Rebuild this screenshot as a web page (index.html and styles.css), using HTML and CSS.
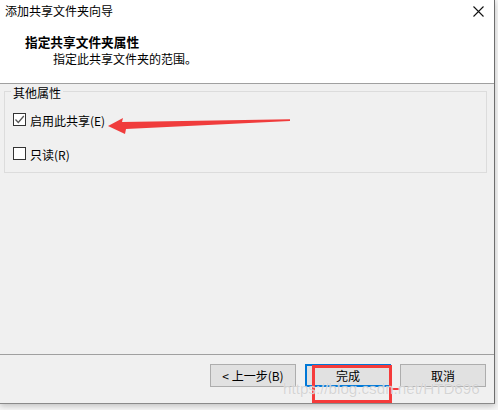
FILE: index.html
```html
<!DOCTYPE html>
<html lang="zh-CN">
<head>
<meta charset="utf-8">
<title>添加共享文件夹向导</title>
<link rel="stylesheet" href="styles.css">
</head>
<body>
<div class="dialog">
  <div class="header">
    <div class="titlebar">
      <span class="title">添加共享文件夹向导</span>
      <svg class="close" width="11" height="11" viewBox="0 0 11 11"><path d="M0.5 0.5 L10.5 10.5 M10.5 0.5 L0.5 10.5" stroke="#111" stroke-width="1.1" fill="none"/></svg>
    </div>
    <div class="heading">指定共享文件夹属性</div>
    <div class="subtitle">指定此共享文件夹的范围。</div>
  </div>
  <div class="content">
    <div class="group">
      <div class="legend">其他属性</div>
      <div class="row first">
        <span class="check"><svg width="11" height="11" viewBox="0 0 11 11"><path d="M1.5 5.5 L4.3 8.5 L9.8 2" stroke="#555" stroke-width="1.3" fill="none"/></svg></span>
        <span class="label">启用此共享(E)</span>
      </div>
      <div class="row second">
        <span class="check"></span>
        <span class="label">只读(R)</span>
      </div>
    </div>
    <div class="footer">
      <button class="btn">&lt; 上一步(B)</button>
      <button class="btn default">完成</button>
      <button class="btn">取消</button>
    </div>
  </div>
</div>
<svg class="arrow" width="200" height="30" viewBox="0 0 200 30"><polygon points="8,16 23,8 22,12 190,9.3 190,11 26,19 25,24" fill="#f03c3c"/></svg>
<div class="redbox"></div>
<div class="redline"></div>
<div class="watermark">https://blog.csdn.net/HTD696</div>
</body>
</html>
```
FILE: styles.css
```css
html, body {
  margin: 0;
  padding: 0;
}
body {
  width: 498px;
  height: 410px;
  overflow: hidden;
  background: #f6f6f6;
  position: relative;
  font-family: "Noto Sans CJK SC", "Microsoft YaHei", sans-serif;
  font-size: 12px;
  color: #000;
}
.dialog {
  width: 494px;
  height: 403px;
  border-right: 1px solid #6e6e6e;
  border-bottom: 1px solid #8a8a8a;
  background: #f0f0f0;
  display: flex;
  flex-direction: column;
  box-shadow: 0 2px 6px rgba(0,0,0,0.22);
}
.header {
  height: 83px;
  background: #fff;
  border-bottom: 1px solid #a0a0a0;
  flex: none;
}
.titlebar {
  display: flex;
  justify-content: space-between;
  align-items: flex-start;
  padding: 4px 10px 0 5px;
  line-height: 14px;
}
.title {
  color: #000;
}
.close {
  margin-top: 2px;
  display: block;
}
.heading {
  margin: 17px 0 0 25px;
  font-weight: bold;
  font-size: 12.7px;
  line-height: 14px;
}
.subtitle {
  margin: 3px 0 0 53px;
  line-height: 14px;
}
.content {
  flex: 1;
  display: flex;
  flex-direction: column;
}
.group {
  box-sizing: border-box;
  margin: 7px 0 0 4px;
  width: 483px;
  height: 82px;
  border: 1px solid #dcdcdc;
  padding-left: 8px;
}
.legend {
  display: table;
  margin: -6px 0 0 -2px;
  padding: 0 2px;
  line-height: 14px;
  background: #f0f0f0;
}
.row {
  display: flex;
  align-items: center;
  height: 13px;
}
.row.first {
  margin-top: 13px;
}
.row.second {
  margin-top: 21px;
}
.check {
  box-sizing: border-box;
  width: 13px;
  height: 13px;
  border: 1px solid #333;
  background: #fff;
  display: flex;
  align-items: center;
  justify-content: center;
  flex: none;
}
.check svg {
  display: block;
}
.label {
  margin-left: 4px;
  line-height: 13px;
  position: relative;
  top: 1px;
}
.footer {
  margin-top: auto;
  height: 39px;
  border-top: 1px solid #a0a0a0;
  display: flex;
  justify-content: flex-end;
  align-items: flex-start;
  gap: 9px;
  padding: 9px 8px 0 0;
  box-sizing: content-box;
}
.btn {
  box-sizing: border-box;
  width: 86px;
  height: 23px;
  background: #e1e1e1;
  border: 1px solid #adadad;
  font-family: "Noto Sans CJK SC", "Microsoft YaHei", sans-serif;
  font-size: 12px;
  color: #000;
  padding: 0;
  line-height: 20px;
}
.btn.default {
  border: 2px solid #0078d7;
}
.arrow {
  position: absolute;
  left: 100px;
  top: 110px;
}
.redbox {
  position: absolute;
  left: 312px;
  top: 365px;
  width: 80px;
  height: 38px;
  box-sizing: border-box;
  border: 3px solid #f53b3b;
}
.redline {
  position: absolute;
  left: 392px;
  top: 388px;
  width: 8px;
  height: 2px;
  background: #f53b3b;
}
.watermark {
  position: absolute;
  left: 283px;
  top: 380px;
  font-family: "Liberation Sans", Arial, sans-serif;
  font-size: 15.2px;
  color: rgba(200, 200, 200, 0.75);
  text-shadow: 0 0 1px rgba(255,255,255,0.9);
  white-space: nowrap;
  pointer-events: none;
}
```
